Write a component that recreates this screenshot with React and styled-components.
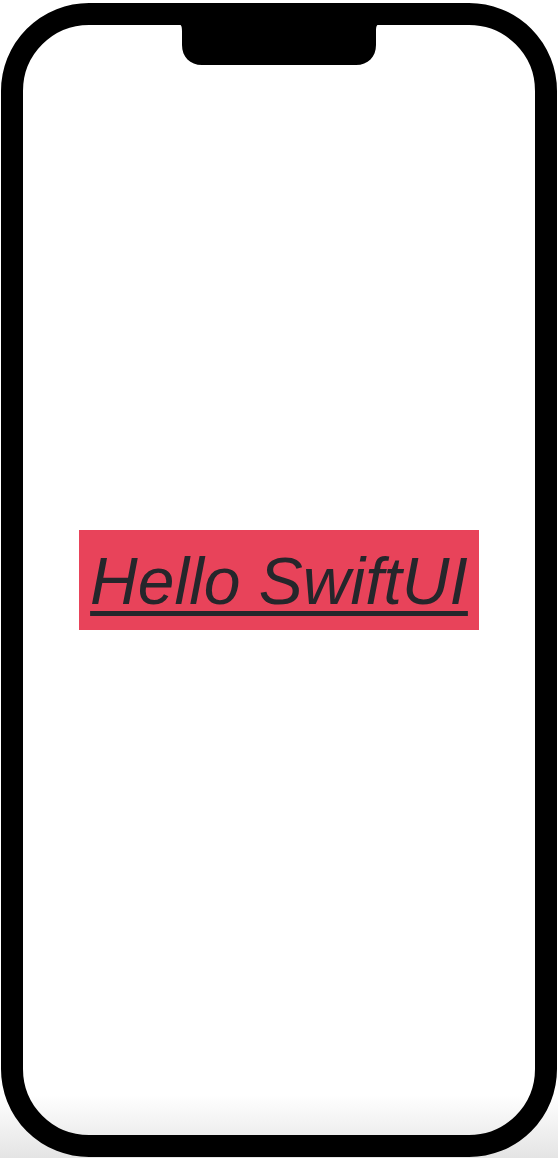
import React from "react";
import styled, { createGlobalStyle } from "styled-components";

const GlobalStyle = createGlobalStyle`
  html, body {
    margin: 0;
    padding: 0;
  }
  body {
    height: 1158px;
    background: linear-gradient(
      to bottom,
      #ffffff 0px,
      #ffffff 1095px,
      #e4e4e4 1158px
    );
    font-family: "Liberation Sans", Arial, sans-serif;
    overflow: hidden;
  }
`;

const Page = styled.div`
  padding: 3px 1px 1px 1px;
`;

const Phone = styled.div`
  position: relative;
  box-sizing: border-box;
  width: 556px;
  height: 1154px;
  border: 22px solid #000;
  border-radius: 88px;
  display: flex;
  align-items: center;
  justify-content: center;
`;

const Notch = styled.svg`
  position: absolute;
  top: -1px;
  left: 50%;
  transform: translateX(-50%);
  display: block;
`;

const Label = styled.div`
  box-sizing: border-box;
  width: 400px;
  height: 100px;
  background: #e8435a;
  display: flex;
  align-items: center;
  justify-content: center;
`;

const Text = styled.span`
  font-family: "Liberation Sans", Arial, sans-serif;
  font-style: italic;
  font-size: 66px;
  line-height: 1;
  color: #25262b;
  text-decoration: underline;
  text-decoration-thickness: 5px;
  text-underline-offset: 7px;
  white-space: nowrap;
  margin-top: 2px;
`;

const NotchShape = () => (
  <Notch width="202" height="41" viewBox="0 0 202 41">
    <path
      d="M0 0 C3 0 4 2 4 7 L4 21 C4 33 12 41 24 41 L178 41 C190 41 198 33 198 21 L198 7 C198 2 199 0 202 0 Z"
      fill="#000"
    />
  </Notch>
);

export default function App() {
  return (
    <>
      <GlobalStyle />
      <Page>
        <Phone>
          <NotchShape />
          <Label>
            <Text>Hello SwiftUI</Text>
          </Label>
        </Phone>
      </Page>
    </>
  );
}
